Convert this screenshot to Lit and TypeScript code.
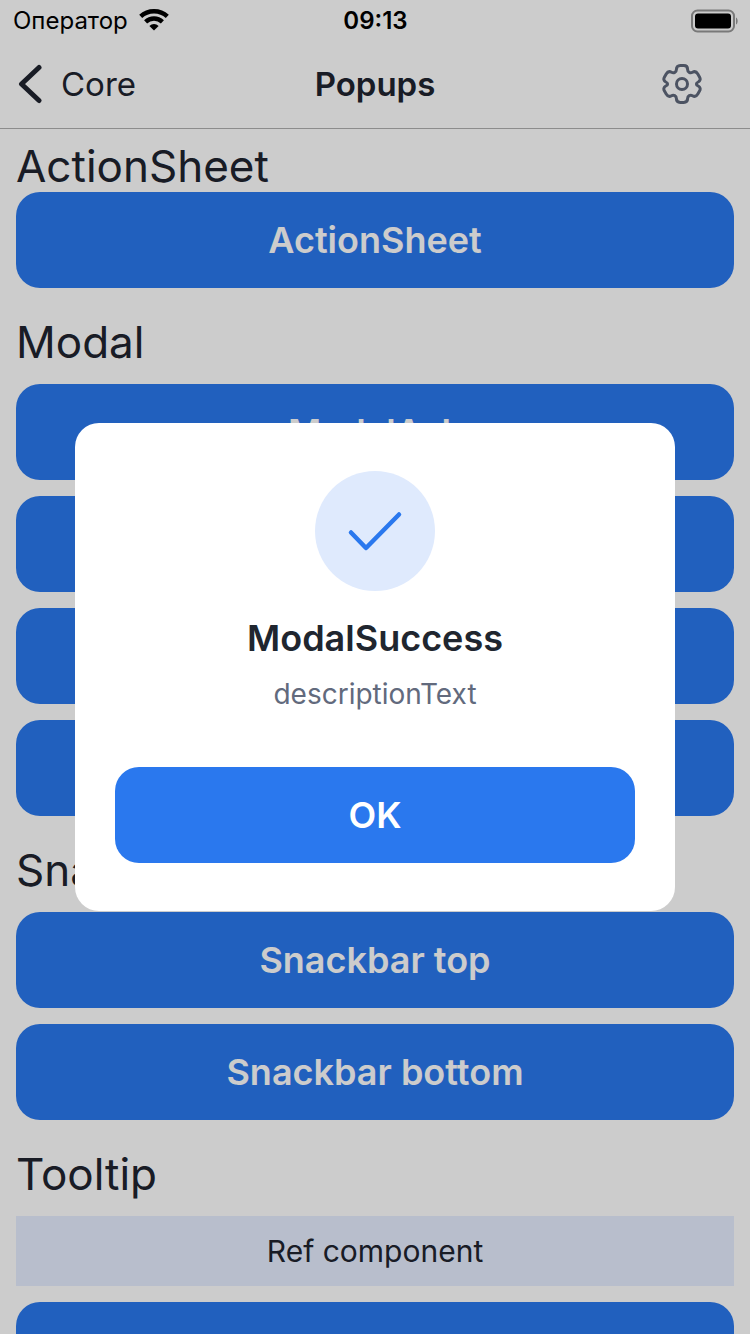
import { LitElement, html, css } from "lit";
import { customElement, property } from "lit/decorators.js";

@customElement("status-bar")
class StatusBar extends LitElement {
  static styles = css`
    :host {
      display: grid;
      grid-template-columns: 1fr auto 1fr;
      align-items: center;
      height: 40px;
      padding: 0 12px 0 13px;
      color: #000;
      font-size: 24px;
      line-height: 42px;
    }
    .carrier {
      display: flex;
      align-items: center;
      gap: 10px;
    }
    .time {
      font-weight: 600;
    }
    .battery {
      justify-self: end;
    }
    svg {
      display: block;
    }
  `;

  render() {
    return html`
      <div class="carrier">
        <span>Оператор</span>
        <svg width="32" height="24" viewBox="0 0 32 24" aria-label="Wi-Fi">
          <g fill="none" stroke="#000" stroke-width="4.4">
            <path d="M2.700 7.400C10 0.500 22 0.500 29.300 7.400" />
            <path d="M7.600 12.900C12.300 8.400 19.700 8.400 24.400 12.900" />
          </g>
          <path d="M11.400 17C14 14.300 18 14.300 20.600 17L16 21.600Z" />
        </svg>
      </div>
      <span class="time">09:13</span>
      <svg class="battery" width="48" height="24" viewBox="0 0 48 24" aria-label="Battery full">
        <rect x="2" y="1.500" width="42" height="21" rx="5.5" fill="none" stroke="#989898" stroke-width="2" />
        <rect x="5" y="4.500" width="36" height="15" rx="3" />
        <path d="M46 8.500C48.200 9.500 48.200 14.500 46 15.500Z" fill="#989898" />
      </svg>
    `;
  }
}

@customElement("nav-header")
class NavHeader extends LitElement {
  static styles = css`
    :host {
      display: grid;
      grid-template-columns: 1fr auto 1fr;
      align-items: center;
      height: 88px;
      padding: 0 48px 0 16px;
      border-bottom: 1px solid #b0b0b0;
    }
    .back {
      display: flex;
      align-items: center;
      gap: 15px;
      color: inherit;
      text-decoration: none;
      font-size: 33px;
      line-height: 40px;
    }
    .title {
      margin: 0 -32px 0 0;
      font-size: 33px;
      line-height: 40px;
      font-weight: 600;
    }
    .settings {
      justify-self: end;
      padding: 0;
      border: 0;
      background: none;
    }
    svg {
      display: block;
    }
  `;

  render() {
    return html`
      <a class="back" href="#core">
        <svg width="30" height="40" viewBox="0 0 30 40" aria-hidden="true">
          <path d="M23 3.500L5.500 20L23 36.500" fill="none" stroke="currentColor" stroke-width="5" stroke-linecap="round" stroke-linejoin="round" />
        </svg>
        Core
      </a>
      <h1 class="title">Popups</h1>
      <button class="settings" aria-label="Settings">
        <svg width="40" height="40" viewBox="0 0 40 40" fill="none" stroke="#5f687b" stroke-width="3" stroke-linejoin="round">
          <path d="M18.300 1.500H21.700C24.300 1.500 25.600 3.200 25.600 5.400C25.600 8.200 28.300 9.500 30.500 8.200C32.400 7.100 34.500 7.700 35.800 9.900L37.500 12.900C38.800 15.200 38.100 17 36.200 18C33.800 19.100 33.800 20.900 36.200 22C38.100 23 38.800 24.800 37.500 27.100L35.800 30.100C34.500 32.300 32.400 32.900 30.500 31.800C28.300 30.500 25.600 31.800 25.600 34.600C25.600 36.800 24.300 38.500 21.700 38.500H18.300C15.700 38.500 14.400 36.800 14.400 34.600C14.400 31.800 11.700 30.500 9.500 31.800C7.600 32.900 5.500 32.300 4.200 30.100L2.500 27.100C1.200 24.800 1.900 23 3.800 22C6.200 20.900 6.200 19.100 3.800 18C1.900 17 1.200 15.200 2.500 12.900L4.200 9.900C5.500 7.700 7.600 7.100 9.500 8.200C11.700 9.500 14.400 8.200 14.400 5.400C14.400 3.200 15.700 1.500 18.300 1.500Z" />
          <circle cx="20" cy="20" r="5.500" />
        </svg>
      </button>
    `;
  }
}

@customElement("primary-button")
class PrimaryButton extends LitElement {
  @property() label = "";

  static styles = css`
    :host {
      display: block;
    }
    .button {
      display: block;
      width: 100%;
      height: 96px;
      padding: 0 24px;
      border: 0;
      border-radius: 24px;
      background: #2a78ee;
      color: #fff;
      font: inherit;
      font-size: 36px;
      line-height: 48px;
      font-weight: 600;
    }
  `;

  render() {
    return html`<button class="button">${this.label}</button>`;
  }
}

@customElement("success-modal")
class SuccessModal extends LitElement {
  static styles = css`
    :host {
      position: fixed;
      inset: 0;
      display: flex;
      align-items: center;
      justify-content: center;
      background: rgba(0, 0, 0, 0.2);
    }
    .card {
      display: flex;
      flex-direction: column;
      align-items: center;
      box-sizing: border-box;
      width: 80%;
      padding: 48px 40px;
      border-radius: 24px;
      background: #fff;
      text-align: center;
    }
    .badge {
      display: block;
      width: 120px;
      height: 120px;
    }
    .title {
      margin: 23px 0 0;
      font-size: 36px;
      line-height: 48px;
      font-weight: 600;
      color: #20262f;
    }
    .description {
      margin: 12px 0 0;
      font-size: 28px;
      line-height: 40px;
      color: #626a7d;
    }
    .confirm {
      width: 100%;
      margin-top: 53px;
    }
  `;

  render() {
    return html`
      <div class="card" role="dialog" aria-modal="true" aria-labelledby="title" aria-describedby="description">
        <svg class="badge" viewBox="0 0 120 120" aria-hidden="true">
          <circle cx="60" cy="60" r="60" fill="#dfeafd" />
          <path d="M36 61.500L51 77L84 43.500" fill="none" stroke="#2a78ee" stroke-width="4.500" stroke-linecap="round" stroke-linejoin="round" />
        </svg>
        <h2 class="title" id="title">ModalSuccess</h2>
        <p class="description" id="description">descriptionText</p>
        <primary-button class="confirm" label="OK"></primary-button>
      </div>
    `;
  }
}

@customElement("app-root")
class AppRoot extends LitElement {
  static styles = css`
    :host {
      display: block;
      height: 100vh;
      overflow: hidden;
      background: #fff;
      color: #20242f;
      font-family: Inter, "Liberation Sans", sans-serif;
    }
    .content {
      display: flex;
      flex-direction: column;
      gap: 28px;
      padding: 11px 16px 16px;
    }
    .section {
      display: flex;
      flex-direction: column;
      gap: 16px;
    }
    .compact {
      gap: 0;
    }
    .heading {
      margin: 0;
      font-size: 44px;
      line-height: 52px;
      font-weight: 400;
    }
    .reference {
      padding: 15px 16px;
      background: #e6eeff;
      font-size: 30px;
      line-height: 40px;
      text-align: center;
    }
  `;

  render() {
    return html`
      <status-bar></status-bar>
      <nav-header></nav-header>
      <main class="content">
        <section class="section compact">
          <h2 class="heading">ActionSheet</h2>
          <primary-button label="ActionSheet"></primary-button>
        </section>
        <section class="section">
          <h2 class="heading">Modal</h2>
          ${["ModalAsk", "ModalError", "ModalLoading", "ModalSuccess"].map(
            (label) => html`<primary-button label=${label}></primary-button>`
          )}
        </section>
        <section class="section">
          <h2 class="heading">Snackbar</h2>
          <primary-button label="Snackbar top"></primary-button>
          <primary-button label="Snackbar bottom"></primary-button>
        </section>
        <section class="section">
          <h2 class="heading">Tooltip</h2>
          <div class="reference">Ref component</div>
          <primary-button label="Tooltip"></primary-button>
        </section>
      </main>
      <success-modal></success-modal>
    `;
  }
}
